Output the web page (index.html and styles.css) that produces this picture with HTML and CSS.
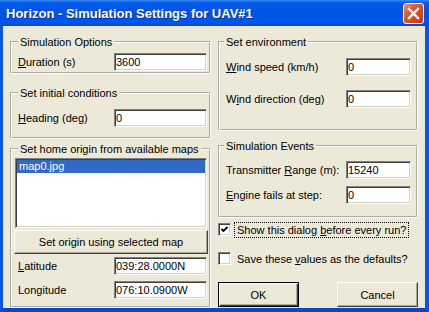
FILE: index.html
```html
<!DOCTYPE html>
<html lang="en">
<head>
    <meta charset="UTF-8">
    <meta name="viewport" content="width=device-width, initial-scale=1.0">
    <title>Horizon - Simulation Settings for UAV#1</title>
    <link rel="stylesheet" href="styles.css">
</head>
<body>
    <div class="window">
        <div class="titlebar">
            <span class="title">Horizon - Simulation Settings for UAV#1</span>
            <button class="close" aria-label="Close">
                <svg width="13" height="13" viewBox="0 0 13 13"><path d="M2 2 L11 11 M11 2 L2 11" stroke="#fff" stroke-width="2.4" stroke-linecap="square"/></svg>
            </button>
        </div>
        <div class="frame">
            <div class="client">
                <div class="col col-left">
                    <fieldset class="group g-options">
                        <legend>Simulation Options</legend>
                        <div class="row"><label><u>D</u>uration (s)</label><input class="edit" value="3600"></div>
                    </fieldset>
                    <fieldset class="group g-initial">
                        <legend>Set initial conditions</legend>
                        <div class="row"><label><u>H</u>eading (deg)</label><input class="edit" value="0"></div>
                    </fieldset>
                    <fieldset class="group g-origin">
                        <legend>Set home origin from available maps</legend>
                        <div class="listbox">
                            <div class="item selected">map0.jpg</div>
                        </div>
                        <button class="btn btn-origin">Set origin using selected map</button>
                        <div class="row row-lat"><label><u>L</u>atitude</label><input class="edit" value="039:28.0000N"></div>
                        <div class="row row-lon"><label>Longitude</label><input class="edit" value="076:10.0900W"></div>
                    </fieldset>
                </div>
                <div class="col col-right">
                    <fieldset class="group g-env">
                        <legend>Set environment</legend>
                        <div class="row"><label><u>W</u>ind speed (km/h)</label><input class="edit" value="0"></div>
                        <div class="row row-dir"><label>W<u>i</u>nd direction (deg)</label><input class="edit" value="0"></div>
                    </fieldset>
                    <fieldset class="group g-events">
                        <legend>Simulation Events</legend>
                        <div class="row"><label>Transmitter <u>R</u>ange (m):</label><input class="edit" value="15240"></div>
                        <div class="row row-engine"><label><u>E</u>ngine fails at step:</label><input class="edit" value="0"></div>
                    </fieldset>
                    <div class="check check-show">
                        <span class="box">
                            <svg width="11" height="11" viewBox="0 0 11 11"><path d="M2.5 5 L4.5 7 L8.5 3" fill="none" stroke="#000" stroke-width="1.8"/></svg>
                        </span>
                        <span class="check-label focus">Show this dialog <u>b</u>efore every run?</span>
                    </div>
                    <div class="check check-save">
                        <span class="box"></span>
                        <span class="check-label">Save these <u>v</u>alues as the defaults?</span>
                    </div>
                    <div class="actions">
                        <button class="btn btn-default">OK</button>
                        <button class="btn">Cancel</button>
                    </div>
                </div>
            </div>
        </div>
    </div>
</body>
</html>
```

FILE: styles.css
```css
body {
    margin: 0;
    font-family: "Liberation Sans", Arial, sans-serif;
    font-size: 11px;
    color: #000;
}

.window {
    width: 429px;
    height: 312px;
    display: flex;
    flex-direction: column;
}

.titlebar {
    height: 26px;
    display: flex;
    align-items: center;
    justify-content: space-between;
    background: linear-gradient(#3d8ef5 0, #0b62eb 2px, #0257e8 5px, #0054e3 55%, #0057ea 85%, #004bd8 100%);
}

.title {
    padding-left: 6px;
    color: #fff;
    font-size: 13px;
    font-weight: bold;
    text-shadow: 1px 1px #0a2e9b;
}

.close {
    align-self: flex-start;
    margin: 3px 5px 0 0;
    width: 21px;
    height: 21px;
    padding: 0;
    display: flex;
    align-items: center;
    justify-content: center;
    border: 1px solid #fff;
    border-radius: 3px;
    background: linear-gradient(135deg, #f0906c 0, #e2582f 35%, #d4461c 70%, #c13a14 100%);
}

.frame {
    flex: 1;
    display: flex;
    border-left: 3px solid #0655e3;
    border-right: 4px solid #0655e3;
    border-bottom: 4px solid #0449c9;
}

.client {
    flex: 1;
    display: flex;
    gap: 7px;
    padding: 9px 7px 0 7px;
    background: #ece9d8;
}

.col {
    display: flex;
    flex-direction: column;
}

.col-left {
    width: 201px;
}

.col-right {
    width: 200px;
}

.group {
    margin: 0;
    min-width: 0;
    border: 2px groove #fff;
}

.group legend {
    line-height: 14px;
    padding: 0 2px;
}

.col-left .group {
    padding: 0 2px 0 3px;
}

.col-left .group legend {
    margin-left: 3px;
}

.col-right .group {
    padding: 0 5px 0 6px;
}

.col-right .group legend {
    margin-left: -2px;
}

.row {
    display: flex;
    align-items: center;
    height: 18px;
}

.row label {
    flex: 1;
}

.col-left .row label {
    padding-left: 3px;
}

.edit {
    box-sizing: border-box;
    height: 18px;
    padding: 0 0 0 1px;
    font: inherit;
    color: #000;
    background: #fff;
    border: 1px solid;
    border-color: #808080 #fff #fff #808080;
    box-shadow: inset 1px 1px #404040, inset -1px -1px #d4d0c8;
    outline: none;
}

.col-left .edit {
    width: 93px;
}

.col-right .edit {
    width: 65px;
}

.g-options {
    padding-top: 4px !important;
    padding-bottom: 1px !important;
}

.g-initial {
    margin-top: 12px;
    padding-top: 9px !important;
    padding-bottom: 10px !important;
}

.g-origin {
    margin-top: 3px;
    padding-top: 2px !important;
    padding-bottom: 7px !important;
}

.listbox {
    box-sizing: border-box;
    height: 70px;
    background: #fff;
    border: 1px solid;
    border-color: #808080 #fff #fff #808080;
    box-shadow: inset 1px 1px #404040, inset -1px -1px #d4d0c8;
    padding: 1px;
}

.item {
    height: 13px;
    line-height: 13px;
    padding-left: 2px;
}

.item.selected {
    background: #316ac5;
    color: #fff;
}

.btn {
    box-sizing: border-box;
    font: inherit;
    color: #000;
    background: #ece9d8;
    border: 1px solid;
    border-color: #fff #404040 #404040 #fff;
    box-shadow: inset -1px -1px #aca899;
    padding: 0;
}

.btn-origin {
    display: block;
    width: calc(100% + 2px);
    margin: 2px -1px 0 -1px;
    height: 24px;
}

.row-lat {
    margin-top: 3px;
}

.row-lon {
    margin-top: 6px;
}

.g-env {
    padding-top: 9px !important;
    padding-bottom: 21px !important;
}

.row-dir {
    margin-top: 14px;
}

.g-events {
    margin-top: 8px;
    padding-top: 8px !important;
    padding-bottom: 12px !important;
}

.row-engine {
    margin-top: 7px;
}

.check {
    display: flex;
    align-items: flex-start;
    height: 16px;
}

.check-show {
    margin-top: 4px;
}

.check-save {
    margin-top: 13px;
}

.box {
    box-sizing: border-box;
    width: 13px;
    height: 13px;
    margin-top: 1px;
    display: flex;
    align-items: center;
    justify-content: center;
    background: #fff;
    border: 1px solid;
    border-color: #808080 #fff #fff #808080;
    box-shadow: inset 1px 1px #404040, inset -1px -1px #d4d0c8;
}

.check-label {
    margin-left: 4px;
    padding: 0 2px;
    line-height: 14px;
    margin-top: 1px;
}

.check-label.focus {
    outline: 1px dotted #000;
}

.actions {
    display: flex;
    justify-content: space-between;
    margin-top: 15px;
}

.actions .btn {
    width: 81px;
    height: 25px;
}

.btn-default {
    border: 1px solid #000;
    box-shadow: inset 1px 1px #fff, inset -1px -1px #404040, inset -2px -2px #aca899;
}
```
